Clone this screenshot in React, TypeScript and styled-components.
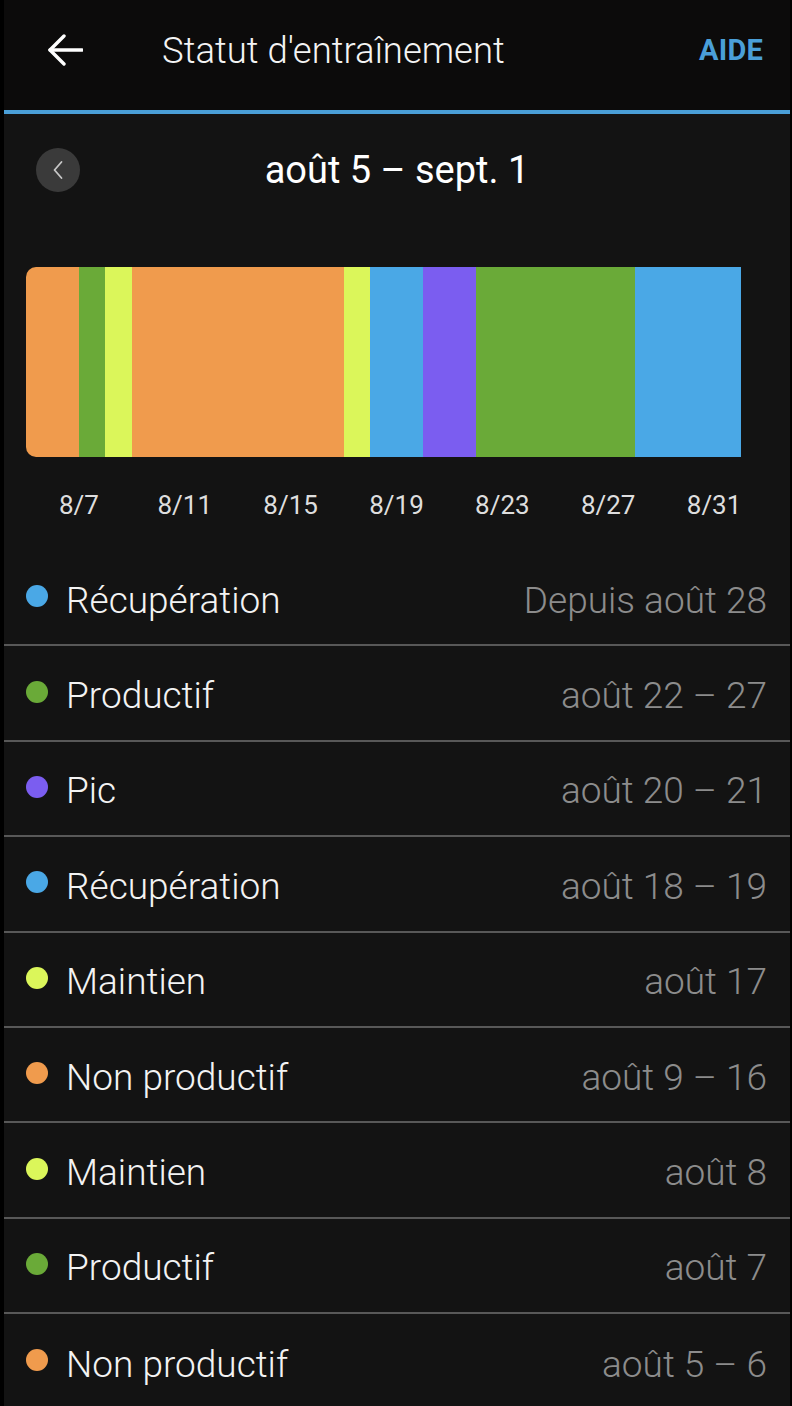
import React from "react";
import styled, { createGlobalStyle } from "styled-components";

const Global = createGlobalStyle`
  html, body { margin: 0; padding: 0; background: #000; }
  body { font-family: Roboto, "Liberation Sans", Arial, sans-serif; -webkit-font-smoothing: antialiased; }
`;

const Screen = styled.div`
  margin: 0 2px 0 4px;
  min-height: 1406px;
  background: #131313;
  color: #f2f2f2;
`;

const Header = styled.header`
  height: 100px;
  box-sizing: content-box;
  background: #0c0b0b;
  border-bottom: 4px solid #4a9fd8;
  display: flex;
  align-items: center;
  padding: 0 27px 10px 43px;
`;

const BackButton = styled.div`
  width: 36px;
  height: 32px;
  display: flex;
  align-items: center;
  justify-content: center;
`;

const Title = styled.h1`
  flex: 1;
  margin: 0 0 0 79px;
  font-size: 36.5px;
  font-weight: 300;
  color: #f4f4f4;
  letter-spacing: 0;
`;

const HelpLink = styled.span`
  font-size: 29px;
  font-weight: 700;
  color: #4a9fd8;
  letter-spacing: 0.2px;
`;

const DateNav = styled.div`
  height: 112px;
  display: grid;
  grid-template-columns: 44px 1fr 44px;
  align-items: center;
  padding: 0 32px;
`;

const RoundButton = styled.div`
  width: 44px;
  height: 44px;
  border-radius: 50%;
  background: #3a3a3a;
  display: flex;
  align-items: center;
  justify-content: center;
`;

const DateTitle = styled.div`
  text-align: center;
  font-size: 38px;
  font-weight: 400;
  color: #ffffff;
`;

const ChartSection = styled.section`
  padding: 41px 23px 32px 22px;
`;

const Bar = styled.div`
  height: 190px;
  display: grid;
  grid-template-columns: repeat(28, 1fr);
`;

const Segment = styled.div<{ $color: string; $first?: boolean }>`
  background: ${(p) => p.$color};
  border-radius: ${(p) => (p.$first ? "10px 0 0 10px" : "0")};
`;

const Axis = styled.div`
  margin-top: 34px;
  height: 28px;
  display: grid;
  grid-template-columns: repeat(28, 1fr);
  align-items: center;
`;

const AxisLabel = styled.span`
  justify-self: center;
  white-space: nowrap;
  font-size: 26px;
  color: #dedede;
  line-height: 28px;
`;

const List = styled.ul`
  list-style: none;
  margin: 0;
  padding: 0;
`;

const Row = styled.li`
  height: 95.4px;
  box-sizing: border-box;
  display: flex;
  align-items: center;
  padding: 5px 23px 0 22px;
  border-bottom: 2px solid #585858;
  &:last-child { border-bottom: none; }
`;

const Dot = styled.span<{ $color: string }>`
  width: 22px;
  height: 22px;
  border-radius: 50%;
  background: ${(p) => p.$color};
  flex-shrink: 0;
  margin-top: -8px;
`;

const Label = styled.span`
  flex: 1;
  margin-left: 18px;
  font-size: 37px;
  font-weight: 300;
  color: #f3f3f3;
`;

const Period = styled.span`
  font-size: 37px;
  font-weight: 300;
  color: #8c8c8c;
`;

const C = {
  orange: "#f09b4d",
  green: "#6aaa38",
  yellow: "#dbf65a",
  blue: "#4aa8e6",
  purple: "#7b5df0",
};

const segments: { color: string; days: number }[] = [
  { color: C.orange, days: 2 },
  { color: C.green, days: 1 },
  { color: C.yellow, days: 1 },
  { color: C.orange, days: 8 },
  { color: C.yellow, days: 1 },
  { color: C.blue, days: 2 },
  { color: C.purple, days: 2 },
  { color: C.green, days: 6 },
  { color: C.blue, days: 4 },
];

const ticks = [
  { label: "8/7", day: 2 },
  { label: "8/11", day: 6 },
  { label: "8/15", day: 10 },
  { label: "8/19", day: 14 },
  { label: "8/23", day: 18 },
  { label: "8/27", day: 22 },
  { label: "8/31", day: 26 },
];

const rows = [
  { color: C.blue, label: "Récupération", period: "Depuis août 28" },
  { color: C.green, label: "Productif", period: "août 22 – 27" },
  { color: C.purple, label: "Pic", period: "août 20 – 21" },
  { color: C.blue, label: "Récupération", period: "août 18 – 19" },
  { color: C.yellow, label: "Maintien", period: "août 17" },
  { color: C.orange, label: "Non productif", period: "août 9 – 16" },
  { color: C.yellow, label: "Maintien", period: "août 8" },
  { color: C.green, label: "Productif", period: "août 7" },
  { color: C.orange, label: "Non productif", period: "août 5 – 6" },
];

export default function App() {
  let start = 1;
  return (
    <>
      <Global />
      <Screen>
        <Header>
          <BackButton>
            <svg width="36" height="32" viewBox="0 0 36 32" fill="none">
              <path d="M35 16H3" stroke="#fff" strokeWidth="3.4" strokeLinecap="round" />
              <path d="M17 2L3 16L17 30" stroke="#fff" strokeWidth="3.4" strokeLinecap="round" strokeLinejoin="round" />
            </svg>
          </BackButton>
          <Title>Statut d'entraînement</Title>
          <HelpLink>AIDE</HelpLink>
        </Header>

        <DateNav>
          <RoundButton>
            <svg width="12" height="20" viewBox="0 0 12 20" fill="none">
              <path d="M9.5 2L2.5 10L9.5 18" stroke="#c8c8c8" strokeWidth="1.8" strokeLinecap="round" strokeLinejoin="round" />
            </svg>
          </RoundButton>
          <DateTitle>août 5 – sept. 1</DateTitle>
          <span />
        </DateNav>

        <ChartSection>
          <Bar>
            {segments.map((s, i) => {
              const col = `${start} / span ${s.days}`;
              start += s.days;
              return <Segment key={i} $color={s.color} $first={i === 0} style={{ gridColumn: col }} />;
            })}
          </Bar>
          <Axis>
            {ticks.map((t) => (
              <AxisLabel key={t.label} style={{ gridColumn: `${t.day} / span 2` }}>
                {t.label}
              </AxisLabel>
            ))}
          </Axis>
        </ChartSection>

        <List>
          {rows.map((r, i) => (
            <Row key={i}>
              <Dot $color={r.color} />
              <Label>{r.label}</Label>
              <Period>{r.period}</Period>
            </Row>
          ))}
        </List>
      </Screen>
    </>
  );
}
